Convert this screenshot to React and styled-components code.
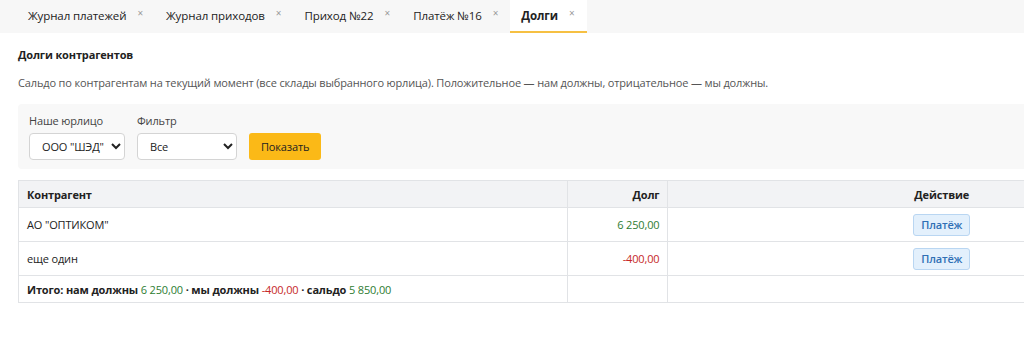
import React from "react";
import styled, { createGlobalStyle } from "styled-components";

const Global = createGlobalStyle`
  html, body { margin: 0; padding: 0; background: #fff; }
  body {
    font-family: "Open Sans", "Noto Sans", sans-serif;
    font-size: 11px;
    letter-spacing: -0.15px;
    color: #222;
  }
`;

const Page = styled.div`
  width: 100%;
  overflow: hidden;
`;

const TabBar = styled.div`
  display: flex;
  align-items: stretch;
  height: 33px;
  padding-left: 17px;
  background: #f7f7f7;
`;

const Tab = styled.div`
  display: flex;
  align-items: center;
  gap: 11px;
  padding: 0 12px 0 11px;
  font-size: 11.5px;
  letter-spacing: -0.1px;
  font-weight: ${(p) => (p.$active ? 700 : 400)};
  color: #222;
  background: ${(p) => (p.$active ? "#fff" : "transparent")};
  border-bottom: 2px solid ${(p) => (p.$active ? "#f6c043" : "transparent")};
  box-sizing: border-box;
`;

const Close = styled.span`
  font-size: 10px;
  font-weight: 400;
  color: #999;
  margin-top: -6px;
`;

const Content = styled.div`
  padding: 14px 18px 0 18px;
  width: 1198px;
`;

const Title = styled.h2`
  margin: 0;
  font-size: 11px;
  font-weight: 700;
  line-height: 16px;
  color: #222;
`;

const Desc = styled.p`
  margin: 12px 0 0;
  font-size: 11px;
  line-height: 16px;
  color: #555;
`;

const FilterPanel = styled.div`
  margin-top: 13px;
  background: #f8f8f8;
  border-radius: 4px;
  padding: 9px 11px 9px;
  display: flex;
  align-items: flex-end;
  gap: 12px;
`;

const Field = styled.div`
  display: flex;
  flex-direction: column;
  gap: 4px;
`;

const Label = styled.label`
  font-size: 11px;
  line-height: 16px;
  color: #444;
`;

const Select = styled.select`
  width: ${(p) => p.$w}px;
  height: 27px;
  font-family: inherit;
  font-size: 11px;
  letter-spacing: -0.15px;
  color: #222;
  background: #fff;
  border: 1px solid #d4d4d4;
  border-radius: 4px;
  padding: 0 4px 0 8px;
`;

const Button = styled.button`
  height: 27px;
  padding: 0 12px;
  font-family: inherit;
  font-size: 11px;
  letter-spacing: -0.15px;
  color: #222;
  background: #fbb917;
  border: none;
  border-radius: 3px;
`;

const Table = styled.table`
  margin-top: 11px;
  width: 1198px;
  border-collapse: collapse;
  font-size: 11px;
  color: #222;
`;

const Th = styled.th`
  background: #f2f3f5;
  border: 1px solid #e1e3e6;
  height: 27px;
  padding: 0 8px;
  font-weight: 700;
  text-align: ${(p) => p.$align || "left"};
  box-sizing: border-box;
`;

const Td = styled.td`
  border: 1px solid #e1e3e6;
  height: ${(p) => p.$h || 34}px;
  padding: 0 8px;
  text-align: ${(p) => p.$align || "left"};
  box-sizing: border-box;
  font-weight: ${(p) => (p.$bold ? 700 : 400)};
`;

const Amount = styled.span`
  font-weight: 400;
  color: ${(p) => (p.$neg ? "#c62828" : "#2e7d32")};
`;

const PayButton = styled.button`
  height: 22px;
  padding: 0 7px;
  font-family: inherit;
  font-size: 11px;
  letter-spacing: -0.15px;
  font-weight: 600;
  color: #2f6fb5;
  background: #e3f0fc;
  border: 1px solid #b9d6f2;
  border-radius: 3px;
`;

const tabs = [
  { t: "Журнал платежей" },
  { t: "Журнал приходов" },
  { t: "Приход №22" },
  { t: "Платёж №16" },
  { t: "Долги", active: true },
];

const rows = [
  { name: 'АО "ОПТИКОМ"', amount: "6 250,00", neg: false },
  { name: "еще один", amount: "-400,00", neg: true },
];

export default function App() {
  return (
    <Page>
      <Global />
      <TabBar>
        {tabs.map((x) => (
          <Tab key={x.t} $active={x.active}>
            {x.t}
            <Close>×</Close>
          </Tab>
        ))}
      </TabBar>
      <Content>
        <Title>Долги контрагентов</Title>
        <Desc>
          Сальдо по контрагентам на текущий момент (все склады выбранного юрлица). Положительное — нам должны, отрицательное — мы должны.
        </Desc>
        <FilterPanel>
          <Field>
            <Label>Наше юрлицо</Label>
            <Select $w={96} defaultValue="1">
              <option value="1">ООО "ШЭД"</option>
            </Select>
          </Field>
          <Field>
            <Label>Фильтр</Label>
            <Select $w={100} defaultValue="all">
              <option value="all">Все</option>
            </Select>
          </Field>
          <Button>Показать</Button>
        </FilterPanel>
        <Table>
          <colgroup>
            <col style={{ width: 549 }} />
            <col style={{ width: 101 }} />
            <col style={{ width: 548 }} />
          </colgroup>
          <thead>
            <tr>
              <Th>Контрагент</Th>
              <Th $align="right">Долг</Th>
              <Th $align="center">Действие</Th>
            </tr>
          </thead>
          <tbody>
            {rows.map((r) => (
              <tr key={r.name}>
                <Td>{r.name}</Td>
                <Td $align="right">
                  <Amount $neg={r.neg}>{r.amount}</Amount>
                </Td>
                <Td $align="center">
                  <PayButton>Платёж</PayButton>
                </Td>
              </tr>
            ))}
            <tr>
              <Td $bold $h={27}>
                Итого: нам должны <Amount>6 250,00</Amount> · мы должны{" "}
                <Amount $neg>-400,00</Amount> · сальдо <Amount>5 850,00</Amount>
              </Td>
              <Td $h={27} />
              <Td $h={27} />
            </tr>
          </tbody>
        </Table>
      </Content>
    </Page>
  );
}
